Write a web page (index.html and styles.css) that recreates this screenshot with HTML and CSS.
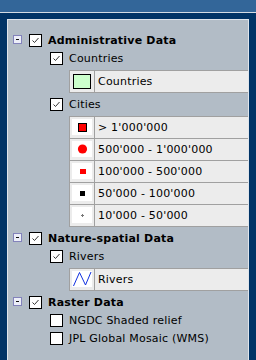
FILE: index.html
```html
<!DOCTYPE html>
<html lang="en">

<head>
    <meta charset="UTF-8">
    <title>Layer tree</title>
    <link rel="stylesheet" href="styles.css">
</head>

<body>
    <div class="topbar"></div>

    <div class="frame">
        <div class="panel">
            <ul class="tree">
                <!-- Administrative Data -->
                <li class="group">
                    <div class="node">
                        <span class="toggle"></span>
                        <span class="check on"><svg width="11" height="11" viewBox="0 0 11 11"><polyline points="2.5,5.5 4.5,7.5 8.5,3" /></svg></span>
                        <span class="label">Administrative Data</span>
                    </div>
                    <ul>
                        <li>
                            <div class="node">
                                <span class="check on"><svg width="11" height="11" viewBox="0 0 11 11"><polyline points="2.5,5.5 4.5,7.5 8.5,3" /></svg></span>
                                <span class="label">Countries</span>
                            </div>
                            <div class="legend">
                                <div class="legend-row">
                                    <div class="sym"><svg width="20" height="16"><rect x="1.5" y="1.5" width="17" height="14" fill="#ccffcc" stroke="#000" /></svg></div>
                                    <div class="name">Countries</div>
                                </div>
                            </div>
                        </li>
                        <li>
                            <div class="node">
                                <span class="check on"><svg width="11" height="11" viewBox="0 0 11 11"><polyline points="2.5,5.5 4.5,7.5 8.5,3" /></svg></span>
                                <span class="label">Cities</span>
                            </div>
                            <div class="legend">
                                <div class="legend-row">
                                    <div class="sym"><svg class="pic" width="20" height="16"><rect x="6.5" y="4.5" width="8" height="8" fill="#ff0000" stroke="#000" /></svg></div>
                                    <div class="name">&gt; 1'000'000</div>
                                </div>
                                <div class="legend-row">
                                    <div class="sym"><svg class="pic" width="20" height="16"><circle cx="10.5" cy="8" r="4.6" fill="#ff0000" /></svg></div>
                                    <div class="name">500'000 - 1'000'000</div>
                                </div>
                                <div class="legend-row">
                                    <div class="sym"><svg class="pic" width="20" height="16"><rect x="8" y="6" width="6" height="5" fill="#ff0000" /></svg></div>
                                    <div class="name">100'000 - 500'000</div>
                                </div>
                                <div class="legend-row">
                                    <div class="sym"><svg class="pic" width="20" height="16"><rect x="8" y="6" width="5" height="5" fill="#000" /></svg></div>
                                    <div class="name">50'000 - 100'000</div>
                                </div>
                                <div class="legend-row">
                                    <div class="sym"><svg class="pic" width="20" height="16"><rect x="9" y="8" width="3" height="1" fill="#777" /><rect x="10" y="7" width="1" height="3" fill="#777" /></svg></div>
                                    <div class="name">10'000 - 50'000</div>
                                </div>
                            </div>
                        </li>
                    </ul>
                </li>

                <!-- Nature-spatial Data -->
                <li class="group">
                    <div class="node">
                        <span class="toggle"></span>
                        <span class="check on"><svg width="11" height="11" viewBox="0 0 11 11"><polyline points="2.5,5.5 4.5,7.5 8.5,3" /></svg></span>
                        <span class="label">Nature-spatial Data</span>
                    </div>
                    <ul>
                        <li>
                            <div class="node">
                                <span class="check on"><svg width="11" height="11" viewBox="0 0 11 11"><polyline points="2.5,5.5 4.5,7.5 8.5,3" /></svg></span>
                                <span class="label">Rivers</span>
                            </div>
                            <div class="legend">
                                <div class="legend-row">
                                    <div class="sym"><svg class="pic" width="20" height="16"><polyline points="1.5,15 7.5,1.5 13.5,14 19,1" fill="none" stroke="#1030e0" /></svg></div>
                                    <div class="name">Rivers</div>
                                </div>
                            </div>
                        </li>
                    </ul>
                </li>

                <!-- Raster Data -->
                <li class="group">
                    <div class="node">
                        <span class="toggle"></span>
                        <span class="check on"><svg width="11" height="11" viewBox="0 0 11 11"><polyline points="2.5,5.5 4.5,7.5 8.5,3" /></svg></span>
                        <span class="label">Raster Data</span>
                    </div>
                    <ul>
                        <li>
                            <div class="node">
                                <span class="check"></span>
                                <span class="label">NGDC Shaded relief</span>
                            </div>
                        </li>
                        <li>
                            <div class="node">
                                <span class="check"></span>
                                <span class="label">JPL Global Mosaic (WMS)</span>
                            </div>
                        </li>
                    </ul>
                </li>
            </ul>
        </div>
    </div>
</body>

</html>
```

FILE: styles.css
```css
* {
    box-sizing: border-box;
}
body {
    margin: 0;
    width: 256px;
    height: 360px;
    overflow: hidden;
    font-family: "DejaVu Sans", Verdana, sans-serif;
    font-size: 11px;
    letter-spacing: 0.2px;
    color: #000;
    background-color: #003366;
}
.topbar {
    height: 13px;
    background-color: #336699;
    border-bottom: 1px solid #d3dbe4;
}
.frame {
    height: 347px;
    padding: 6px 7px 0;
}
.panel {
    height: 100%;
    padding-top: 11px;
    overflow: hidden;
    background-color: #b2bcc6;
    border: 1px solid #dfe5ec;
    border-bottom: none;
}
ul {
    list-style: none;
    margin: 0;
    padding: 0;
}
.node {
    display: flex;
    align-items: center;
    height: 18px;
    white-space: nowrap;
}
.group > .node .label {
    font-weight: bold;
}
.group > ul .node {
    padding-left: 42px;
}
.toggle {
    position: relative;
    flex: none;
    width: 9px;
    height: 9px;
    margin: 0 7px 2px 5px;
    border: 1px solid #8383bb;
    background-color: #eceef8;
}
.toggle::after {
    content: "";
    position: absolute;
    left: 2px;
    top: 3px;
    width: 3px;
    height: 1px;
    background-color: #111;
}
.check {
    flex: none;
    display: flex;
    width: 13px;
    height: 13px;
    margin-right: 6px;
    border: 1px solid #000;
    background-color: #fff;
}
.check polyline {
    fill: none;
    stroke: #333;
    stroke-width: 1;
}
.legend {
    width: 180px;
    margin: 3px 0 2px 61px;
    border: 1px solid #a0a0a0;
    border-right: none;
    background-color: #ececec;
}
.legend-row {
    display: flex;
    height: 21px;
    box-sizing: content-box;
}
.legend-row + .legend-row {
    border-top: 1px solid #a0a0a0;
}
.sym {
    flex: none;
    width: 25px;
    padding: 2px 0 0 2px;
    border-right: 1px solid #a0a0a0;
}
.sym svg {
    display: block;
}
.sym .pic {
    background-color: #fff;
}
.name {
    display: flex;
    align-items: center;
    padding-left: 3px;
    white-space: nowrap;
}
```
